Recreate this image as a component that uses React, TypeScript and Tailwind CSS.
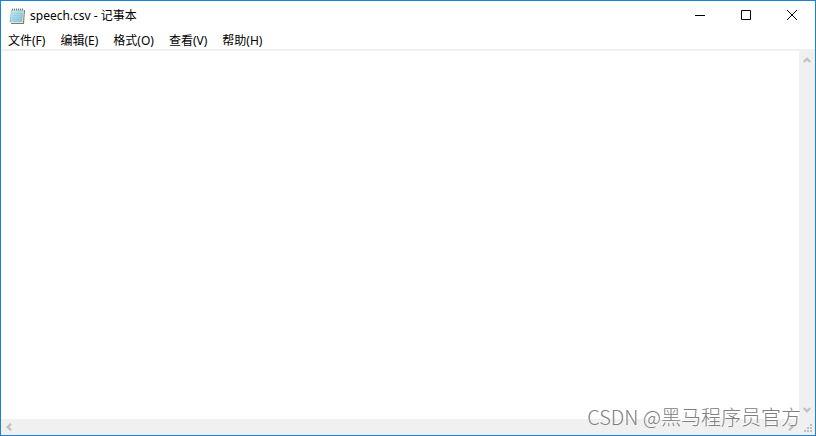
import type { ReactNode } from "react";

const menus = ["文件(F)", "编辑(E)", "格式(O)", "查看(V)", "帮助(H)"];

function NotepadIcon() {
  return (
    <svg width="16" height="16" viewBox="0 0 16 16" aria-hidden="true">
      <defs>
        <linearGradient id="page" x1="0" y1="0" x2="1" y2="1">
          <stop offset="0" stopColor="#d3f0f5" />
          <stop offset="1" stopColor="#7dbfd4" />
        </linearGradient>
      </defs>
      <path d="M4 2h12l-1 14H2z" fill="#857a5c" />
      <path d="M2.5 1.5H15L14 15H.5z" fill="#eef3ee" />
      <path d="M2.5 1.5h12l-1.2 12.7H.6z" fill="url(#page)" />
      <path d="M2.6 2L1 14" stroke="#93b9c4" strokeWidth=".7" />
      <path d="M4 5.5h9.5M3.7 7.5h9.5M3.4 9.5h9.5M3 11.5h9.5" stroke="#79b5c8" strokeWidth=".3" />
      <path d="M3.5 .5v2M5.5 .5v2M7.5 .5v2M9.5 .5v2M11.5 .5v2M13.5 .5v2" stroke="#4f6065" strokeWidth=".8" />
    </svg>
  );
}

function WindowButton({ label, children }: { label: string; children: ReactNode }) {
  return (
    <button aria-label={label} className="flex w-[46px] items-center justify-center hover:bg-gray-200">
      <svg width="12" height="12" viewBox="0 0 12 12" fill="none" stroke="#000">
        {children}
      </svg>
    </button>
  );
}

function ScrollArrow({ label, d }: { label: string; d: string }) {
  return (
    <button aria-label={label} className="flex size-4 items-center justify-center">
      <svg width="8" height="8" viewBox="0 0 8 8" fill="none" stroke="#bfbfbf" strokeWidth="2.2">
        <path d={d} />
      </svg>
    </button>
  );
}

function ResizeGrip() {
  return (
    <svg width="16" height="16" viewBox="0 0 16 16" fill="#bfbfbf" aria-hidden="true">
      <path d="M11 5h2v2h-2zM8 8h2v2H8zM11 8h2v2h-2zM5 11h2v2H5zM8 11h2v2H8zM11 11h2v2h-2z" />
    </svg>
  );
}

export default function App() {
  return (
    <div className="relative flex min-h-screen flex-col border border-[#1883d7] bg-white font-['Noto_Sans','Noto_Sans_CJK_SC',sans-serif] text-xs text-black">
      <header className="flex h-7 justify-between">
        <div className="flex items-center gap-1 pt-px pl-2">
          <NotepadIcon />
          <h1 className="pl-px">speech.csv - 记事本</h1>
        </div>
        <div className="flex">
          <WindowButton label="最小化">
            <path d="M1 6.5h10" />
          </WindowButton>
          <WindowButton label="最大化">
            <path d="M1.5 1.5h9v9h-9z" />
          </WindowButton>
          <WindowButton label="关闭">
            <path d="M1 1l10 10M11 1L1 11" />
          </WindowButton>
        </div>
      </header>

      <nav className="flex h-5 items-center gap-px pt-1">
        {menus.map((menu) => (
          <button key={menu} className="px-[7px] hover:bg-sky-100">
            {menu}
          </button>
        ))}
      </nav>

      <main className="flex flex-1 border-t-2 border-[#f0f0f0]">
        <textarea aria-label="speech.csv" className="flex-1 resize-none p-1 outline-none" />
        <div className="flex w-4 flex-col justify-between bg-[#f0f0f0] py-px">
          <ScrollArrow label="向上滚动" d="M.7 6L4 2.7 7.3 6" />
          <ScrollArrow label="向下滚动" d="M.7 2L4 5.3 7.3 2" />
        </div>
      </main>

      <footer className="flex h-4 bg-[#f0f0f0]">
        <div className="flex flex-1 justify-between">
          <ScrollArrow label="向左滚动" d="M6 .7L2.7 4 6 7.3" />
          <ScrollArrow label="向右滚动" d="M2 .7L5.3 4 2 7.3" />
        </div>
        <ResizeGrip />
      </footer>

      <p className="pointer-events-none absolute right-[14px] bottom-1 font-['Noto_Sans_CJK_SC',sans-serif] text-xl leading-7 font-light text-[#808080] [text-shadow:-1px_-1px_0_#fff]">
        CSDN @黑马程序员官方
      </p>
    </div>
  );
}
